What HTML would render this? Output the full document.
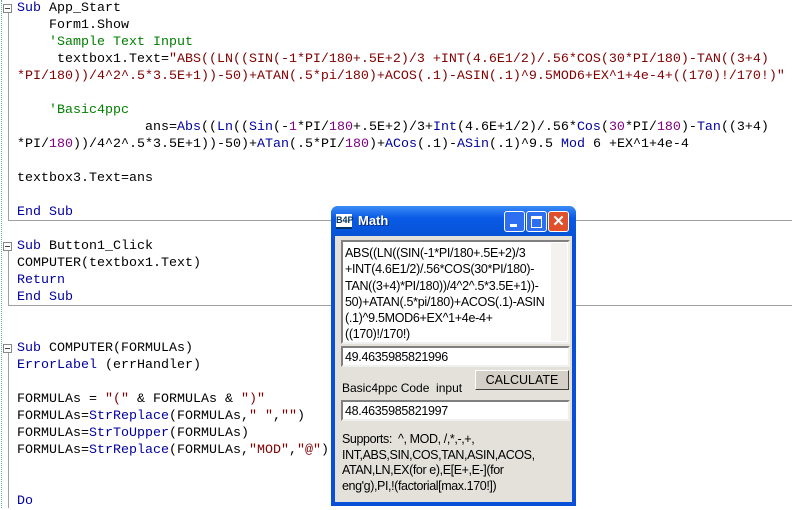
<!DOCTYPE html>
<html><head><meta charset="utf-8"><style>
body{margin:0;width:792px;height:508px;background:#fff;overflow:hidden;position:relative;font-family:"Liberation Mono",monospace}
.code{position:absolute;left:17px;top:0;font-size:13.33px;line-height:17px;white-space:pre;color:#000}
.k{color:#0000a0}.s{color:#800000}.c{color:#008000}.n{color:#800080}
.sep{position:absolute;left:8px;right:0;height:1px;background:#a0a0a0}
.fold{position:absolute;left:3px;width:7px;height:7px;border:1px solid #888;background:#fff}
.fold:after{content:"";position:absolute;left:1px;top:3px;width:5px;height:1px;background:#444}
.vl{position:absolute;left:8px;width:1px;background:#a0a0a0}
.win{position:absolute;left:331px;top:206px;width:245px;height:300px;background:#0a4fd8;border-radius:7px 7px 0 0}
.title{position:absolute;left:0;top:0;right:0;height:30px;background:linear-gradient(#3a8cf7,#0a5ae6 40%,#0553d6);border-radius:7px 7px 0 0}
.body{position:absolute;left:4px;top:30px;right:4px;bottom:4px;background:#e3e1da;font-family:"Liberation Sans",sans-serif;font-size:12px}
.box{position:absolute;background:#fff;border:2px solid;border-color:#808080 #f0f0f0 #f0f0f0 #808080;box-sizing:border-box;padding:1px 2px;line-height:16.3px;letter-spacing:-0.3px;white-space:nowrap;overflow:hidden}
.btn{position:absolute;border-radius:3px;border:1px solid #333}
</style></head><body>
<div style="position:absolute;left:1px;top:0;height:508px;border-left:1px dotted #6a9"></div>
<div class="vl" style="top:12px;height:208px"></div>
<div class="vl" style="top:250px;height:55px"></div>
<div class="vl" style="top:352px;height:156px"></div>
<div class="sep" style="top:220px"></div>
<div class="sep" style="top:305px"></div>
<div class="fold" style="top:4px"></div>
<div class="fold" style="top:242px"></div>
<div class="fold" style="top:344px"></div>
<div class="code"><span class="k">Sub</span> App_Start
    Form1.Show
    <span class="c">'Sample Text Input</span>
     textbox1.Text=<span class="s">"ABS((LN((SIN(-1*PI/180+.5E+2)/3 +INT(4.6E1/2)/.56*COS(30*PI/180)-TAN((3+4)</span>
<span class="s">*PI/180))/4^2^.5*3.5E+1))-50)+ATAN(.5*pi/180)+ACOS(.1)-ASIN(.1)^9.5MOD6+EX^1+4e-4+((170)!/170!)"</span>

    <span class="c">'Basic4ppc</span>
                ans=<span class="k">Abs</span>((<span class="k">Ln</span>((<span class="k">Sin</span>(-<span class="n">1</span>*PI/<span class="n">180</span>+.5E+2)/3+<span class="k">Int</span>(4.6E+1/2)/.56*<span class="k">Cos</span>(<span class="n">30</span>*PI/<span class="n">180</span>)-<span class="k">Tan</span>((3+4)
*PI/<span class="n">180</span>))/4^2^.5*3.5E+1))-50)+<span class="k">ATan</span>(.5*PI/<span class="n">180</span>)+<span class="k">ACos</span>(.1)-<span class="k">ASin</span>(.1)^9.5 <span class="k">Mod</span> 6 +EX^1+4e-4

textbox3.Text=ans

<span class="k">End Sub</span>

<span class="k">Sub</span> Button1_Click
COMPUTER(textbox1.Text)
<span class="k">Return</span>
<span class="k">End Sub</span>


<span class="k">Sub</span> COMPUTER(FORMULAs)
<span class="k">ErrorLabel</span> (errHandler)

FORMULAs = <span class="s">"("</span> &amp; FORMULAs &amp; <span class="s">")"</span>
FORMULAs=<span class="k">StrReplace</span>(FORMULAs,<span class="s">" "</span>,<span class="s">""</span>)
FORMULAs=<span class="k">StrToUpper</span>(FORMULAs)
FORMULAs=<span class="k">StrReplace</span>(FORMULAs,<span class="s">"MOD"</span>,<span class="s">"@"</span>)


<span class="k">Do</span></div>

<div class="win">
 <div class="title">
  <div style="position:absolute;left:5px;top:8px;width:16px;height:13px;background:#fff;color:#036;font:bold 9px 'Liberation Sans',sans-serif;line-height:12px;text-align:center;border-bottom:2px solid #036">B4P</div>
  <div style="position:absolute;left:27px;top:7px;color:#fff;font:bold 13px 'Liberation Sans',sans-serif;text-shadow:1px 1px #0a2a80">Math</div>
  <div class="btn" style="left:173px;top:5px;width:19px;height:19px;background:#2e6ef0;border-color:#fff"><div style="position:absolute;left:5px;top:12px;width:7px;height:3px;background:#fff"></div></div>
  <div class="btn" style="left:195px;top:5px;width:19px;height:19px;background:#2e6ef0;border-color:#fff"><div style="position:absolute;left:4px;top:4px;width:9px;height:8px;border:1px solid #fff;border-top-width:3px"></div></div>
  <div class="btn" style="left:217px;top:5px;width:19px;height:19px;background:#e0502a;border-color:#fff;color:#fff;font:bold 15px 'Liberation Sans',sans-serif;text-align:center;line-height:19px">✕</div>
 </div>
 <div class="body">
  <div class="box" style="left:6px;top:4px;width:229px;height:104px;padding-top:3px;font-size:12.5px">ABS((LN((SIN(-1*PI/180+.5E+2)/3<br>+INT(4.6E1/2)/.56*COS(30*PI/180)-<br>TAN((3+4)*PI/180))/4^2^.5*3.5E+1))-<br>50)+ATAN(.5*pi/180)+ACOS(.1)-ASIN<br>(.1)^9.5MOD6+EX^1+4e-4+<br>((170)!/170!)
   <div style="position:absolute;right:1px;top:1px;width:16px;bottom:1px;background:#f3f2ee"></div></div>
  <div class="box" style="left:6px;top:110px;width:229px;height:21px;font-size:12.5px">49.4635985821996</div>
  <div style="position:absolute;left:140px;top:134px;width:94px;height:20px;background:#d4d0c8;border:1px solid;border-color:#fff #404040 #404040 #fff;box-sizing:border-box;text-align:center;line-height:18px;font-size:12.5px">CALCULATE</div>
  <div style="position:absolute;left:7px;top:145px">Basic4ppc Code&nbsp; input</div>
  <div class="box" style="left:6px;top:164px;width:229px;height:21px;font-size:12.5px">48.4635985821997</div>
  <div style="position:absolute;left:7px;top:196px;width:235px;line-height:15.5px;letter-spacing:-0.4px;white-space:nowrap;font-size:12.5px">Supports:&nbsp; ^, MOD, /,*,-,+,<br>INT,ABS,SIN,COS,TAN,ASIN,ACOS,<br>ATAN,LN,EX(for e),E[E+,E-](for<br>eng'g),PI,!(factorial[max.170!])</div>
 </div>
</div>
</body></html>
